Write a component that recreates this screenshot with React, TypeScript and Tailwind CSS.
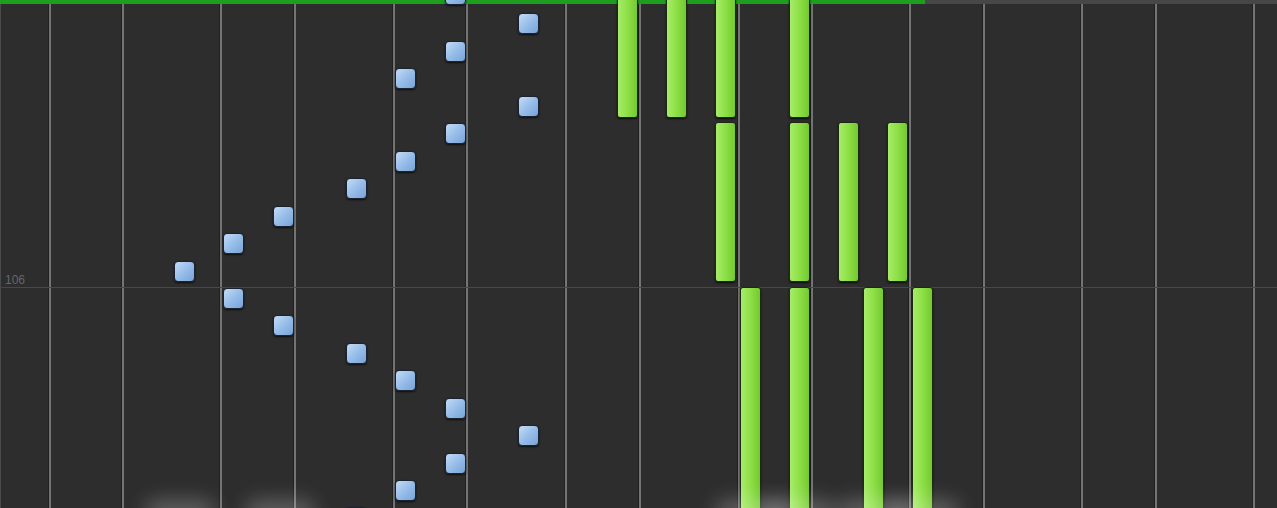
import React from "react";

// piano roll snapshot: falling notes over an octave grid

// octave columns (C-E = 3 white keys, F-B = 4 white keys)
const columns = [
  "w-[73px]", "w-[98px]", "w-[74px]", "w-[99px]", "w-[73px]", "w-[99px]", "w-[74px]",
  "w-[99px]", "w-[73px]", "w-[98px]", "w-[74px]", "w-[98px]", "w-[74px]", "w-[98px]", "flex-1",
];

const blueNotes: [number, number][] = [
  [455, -10],
  [528, 19],
  [455, 47],
  [405, 74],
  [528, 102],
  [455, 129],
  [405, 157],
  [356, 184],
  [283, 212],
  [233, 239],
  [184, 267],
  [233, 294],
  [283, 321],
  [356, 349],
  [405, 376],
  [455, 404],
  [528, 431],
  [455, 459],
  [405, 486],
  [356, 513],
];

// [centerX, top, bottom] relative to the roll
const greenBars: [number, number, number][] = [
  [627, -10, 114],
  [676, -10, 114],
  [725, -10, 114],
  [799, -10, 114],
  [725, 118, 278],
  [799, 118, 278],
  [848, 118, 278],
  [897, 118, 278],
  [750, 283, 530],
  [799, 283, 530],
  [873, 283, 530],
  [922, 283, 530],
];

const glows = [180, 280, 750, 800, 872, 924];

export default function App() {
  return (
    <div className="flex flex-col w-[1277px] h-[508px] overflow-hidden bg-[#2d2d2d] font-['Liberation_Sans',sans-serif]">
      {/* progress strip */}
      <div className="flex h-[4px] shrink-0">
        <div className="w-[925px] bg-[#1e9e1e]" />
        <div className="flex-1 bg-[#474747]" />
      </div>

      <div className="relative flex-1">
        {/* octave grid */}
        <div className="flex h-full">
          <div className="w-[49px] border-l border-[#4a4a4a]" />
          {columns.map((c, i) => (
            <div key={i} className={`${c} border-l-2 border-[#747474] shadow-[-1px_0_0_#202020]`} />
          ))}
        </div>

        {/* measure 106 */}
        <div className="absolute left-0 right-0 top-[283px] h-px bg-[#484848]" />
        <span className="absolute left-[5px] top-[267px] text-[12px] text-[#666666]">106</span>

        {/* left hand notes */}
        {blueNotes.map(([x, y], i) => (
          <div
            key={i}
            className="absolute w-[21px] h-[21px] rounded-[4px] border border-[#1b2230] bg-gradient-to-br from-[#c4dcf6] via-[#97bde9] to-[#78a4d8] shadow-[0_1px_2px_rgba(0,0,0,0.7)]"
            style={{ left: x - 10, top: y - 10 }}
          />
        ))}

        {/* right hand notes */}
        {greenBars.map(([x, t, b], i) => (
          <div
            key={i}
            className="absolute w-[21px] rounded-[3px] border border-[#1c2a12] bg-gradient-to-r from-[#a6ec68] via-[#8ddf45] to-[#76c832] shadow-[0_1px_2px_rgba(0,0,0,0.7)]"
            style={{ left: x - 10, top: t, height: b - t }}
          />
        ))}

        {/* key hit glow */}
        {glows.map((x) => (
          <div
            key={x}
            className="absolute w-[70px] h-[24px] rounded-full bg-white/25 blur-[10px]"
            style={{ left: x - 35, top: 496 }}
          />
        ))}
      </div>
    </div>
  );
}
